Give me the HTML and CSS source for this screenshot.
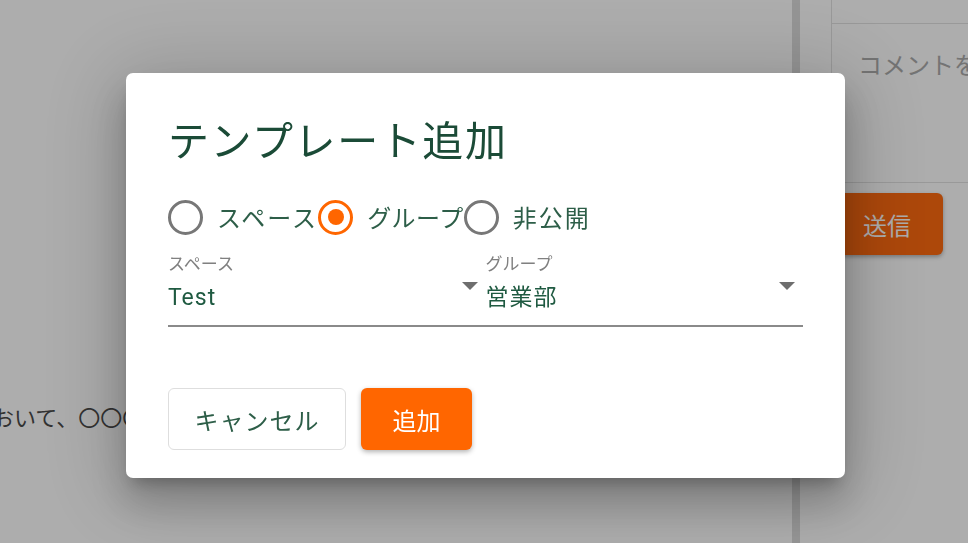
FILE: index.html
```html
<!DOCTYPE html>
<html lang="ja">
<head>
<meta charset="utf-8">
<title>テンプレート追加</title>
<link rel="stylesheet" href="styles.css">
</head>
<body>
<div class="page">
  <main class="main">
    <p class="body-text">おいて、〇〇〇〇について</p>
  </main>
  <div class="divider"></div>
  <aside class="side">
    <div class="side-inner">
      <div class="side-top"></div>
      <div class="comment">コメントを入力</div>
    </div>
    <button class="send">送信</button>
  </aside>
</div>

<div class="overlay">
  <div class="dialog">
    <h1 class="title">テンプレート追加</h1>
    <div class="radios">
      <label class="radio"><span class="circle"></span><span class="radio-label">スペース</span></label>
      <label class="radio checked"><span class="circle"><span class="dot"></span></span><span class="radio-label tight">グループ</span></label>
      <label class="radio"><span class="circle"></span><span class="radio-label">非公開</span></label>
    </div>
    <div class="fields">
      <div class="field">
        <div class="field-label">スペース</div>
        <div class="field-value">Test</div>
        <span class="arrow"></span>
      </div>
      <div class="field">
        <div class="field-label">グループ</div>
        <div class="field-value">営業部</div>
        <span class="arrow"></span>
      </div>
    </div>
    <div class="actions">
      <button class="btn cancel">キャンセル</button>
      <button class="btn primary">追加</button>
    </div>
  </div>
</div>
</body>
</html>
```

FILE: styles.css
```css
* { box-sizing: border-box; }
html, body {
  margin: 0;
  padding: 0;
  width: 968px;
  height: 543px;
  overflow: hidden;
  font-family: "Roboto", "Noto Sans CJK JP", sans-serif;
  background: #ffffff;
}

.page {
  display: flex;
  height: 543px;
}
.main {
  width: 792px;
  flex: none;
  padding-top: 400px;
  overflow: hidden;
}
.body-text {
  margin: 0 0 0 -8px;
  font-family: "Noto Sans CJK JP", sans-serif;
  font-size: 22px;
  line-height: 32px;
  color: #4a4a4a;
  white-space: nowrap;
}
.divider {
  width: 8px;
  flex: none;
  background: #dcdcdc;
}
.side {
  flex: 1;
  padding-left: 31px;
  display: flex;
  flex-direction: column;
  align-items: flex-start;
  overflow: hidden;
}
.side-inner {
  width: 100%;
  border-left: 1px solid #e2e2e2;
}
.side-top {
  height: 24px;
  border-bottom: 1px solid #e2e2e2;
}
.comment {
  height: 159px;
  border-bottom: 1px solid #e2e2e2;
  padding: 22px 0 0 26px;
  font-family: "Noto Sans CJK JP", sans-serif;
  font-size: 24px;
  line-height: 36px;
  color: #ababab;
  white-space: nowrap;
  overflow: hidden;
}
.send {
  margin-top: 10px;
  width: 112px;
  height: 62px;
  border: none;
  border-radius: 6px;
  background: #ff6a10;
  color: #ffffff;
  font-family: "Noto Sans CJK JP", sans-serif;
  font-size: 24px;
  box-shadow: 0 2px 4px rgba(0,0,0,0.3);
}

.overlay {
  position: fixed;
  inset: 0;
  background: rgba(0, 0, 0, 0.32);
  padding: 73px 0 0 126px;
}
.dialog {
  width: 719px;
  height: 405px;
  background: #ffffff;
  border-radius: 7px;
  padding: 42px 42px 29px 42px;
  box-shadow: 0 11px 15px -7px rgba(0,0,0,0.25),
              0 24px 38px 3px rgba(0,0,0,0.18),
              0 9px 80px 16px rgba(0,0,0,0.16);
}
.title {
  margin: 0;
  font-family: "Noto Sans CJK JP", sans-serif;
  font-weight: 400;
  font-size: 41px;
  line-height: 46px;
  letter-spacing: 1.6px;
  color: #1b4b37;
}
.radios {
  display: flex;
  margin-top: 38px;
  height: 36px;
}
.radio {
  display: flex;
  align-items: center;
}
.circle {
  width: 35px;
  height: 35px;
  border: 3px solid #777777;
  border-radius: 50%;
  display: flex;
  align-items: center;
  justify-content: center;
  margin-right: 14px;
}
.checked .circle { border-color: #ff6600; }
.dot {
  width: 16px;
  height: 16px;
  border-radius: 50%;
  background: #ff6600;
}
.radio-label {
  font-family: "Noto Sans CJK JP", sans-serif;
  font-size: 24px;
  line-height: 36px;
  letter-spacing: 2px;
  color: #2d5e48;
}
.radio-label.tight { letter-spacing: 0.5px; }

.fields {
  display: flex;
  margin-top: 16px;
  border-bottom: 2px solid #8a8a8a;
}
.field {
  flex: 1;
  position: relative;
  padding-bottom: 10px;
}
.field-label {
  font-family: "Noto Sans CJK JP", sans-serif;
  font-size: 17px;
  line-height: 24px;
  color: #808080;
}
.field-value {
  margin-top: 6px;
  font-size: 23px;
  line-height: 34px;
  letter-spacing: 1px;
  color: #1f5a41;
  font-family: "Roboto", "Noto Sans CJK JP", sans-serif;
}
.arrow {
  position: absolute;
  right: 8px;
  top: 31px;
  width: 0;
  height: 0;
  border-left: 8px solid transparent;
  border-right: 8px solid transparent;
  border-top: 8px solid #6e6e6e;
}

.actions {
  display: flex;
  gap: 15px;
  margin-top: 61px;
}
.btn {
  height: 62px;
  border-radius: 6px;
  font-family: "Noto Sans CJK JP", sans-serif;
  font-size: 24px;
  cursor: pointer;
}
.cancel {
  width: 178px;
  background: #ffffff;
  border: 1px solid #dedede;
  color: #2d5e48;
  letter-spacing: 1px;
}
.primary {
  width: 111px;
  background: #ff6600;
  border: none;
  color: #ffffff;
  box-shadow: 0 2px 5px rgba(0,0,0,0.3);
}
```
